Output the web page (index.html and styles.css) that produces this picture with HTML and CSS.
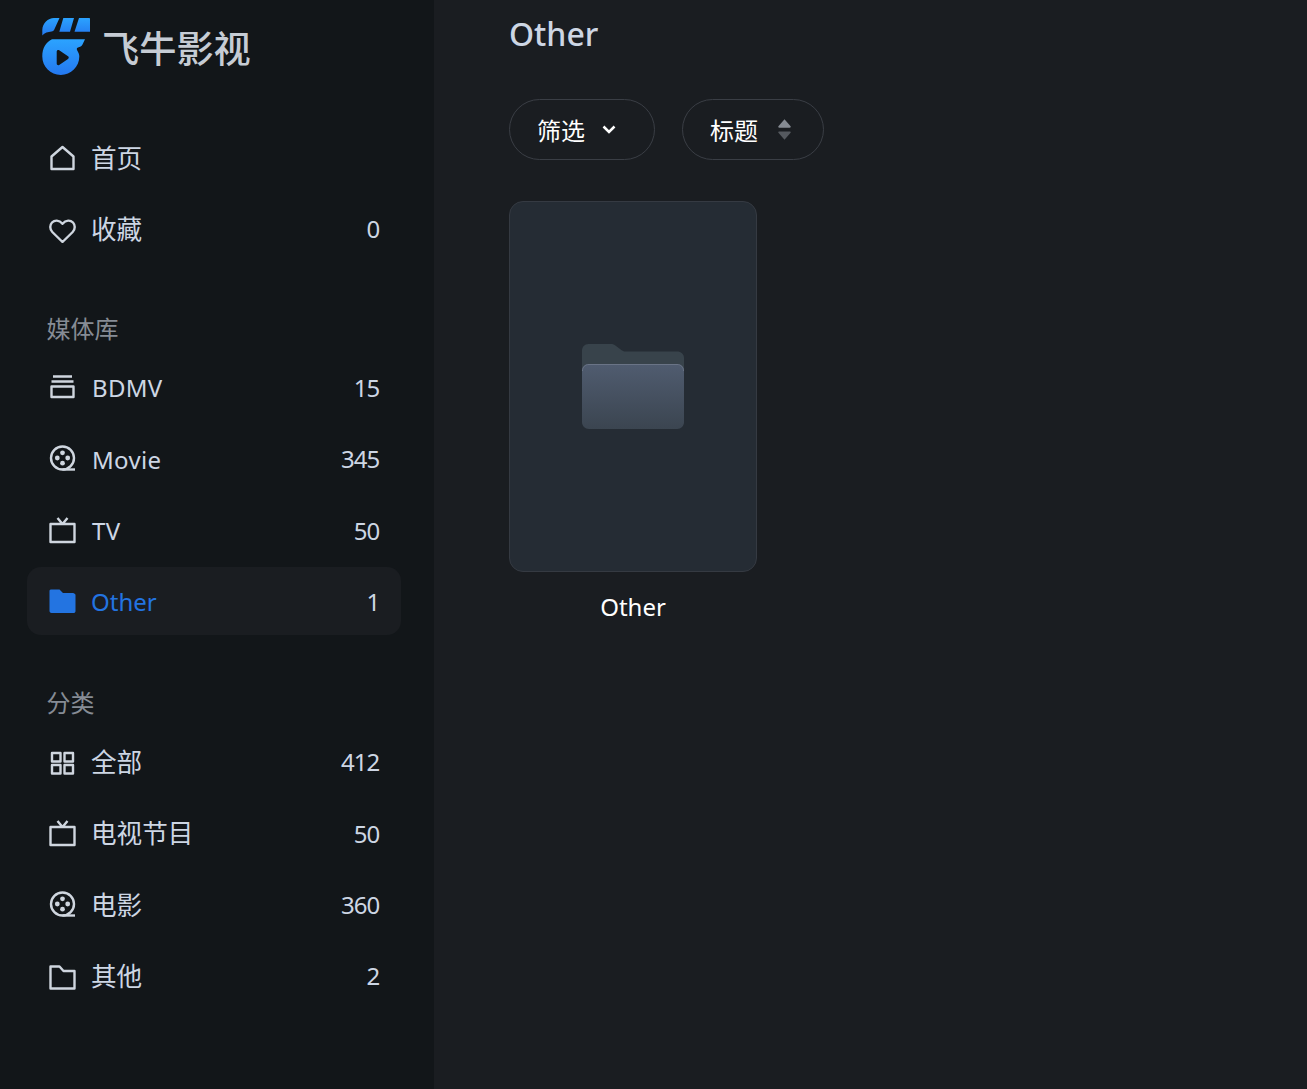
FILE: index.html
```html
<!DOCTYPE html>
<html lang="zh-CN">
<head>
<meta charset="utf-8">
<title>飞牛影视</title>
<link rel="stylesheet" href="styles.css">
</head>
<body>
<div class="app">
  <aside class="sidebar">
    <div class="brand">
      <svg class="logo" viewBox="0 0 48 57" aria-hidden="true">
        <defs>
          <linearGradient id="lg" x1="0" y1="0" x2="0" y2="1"><stop offset="0" stop-color="#2ba3ff"/><stop offset="1" stop-color="#2478f0"/></linearGradient>
        </defs>
        <path fill="url(#lg)" d="M.3 17.500V12C.5 5 6 0 12 0H17.500L12.500 11C12 12.500 11 13.200 9.500 13.400C6 13.800 2.500 14.500 .3 17.500ZM21.300 0H32L28 13.700H17.300ZM37 0H47C47.600 0 48 .4 48 1V13.700H32.500Z"/>
        <path fill="url(#lg)" fill-rule="evenodd" d="M10 21.300H43L40.500 26.500C39.500 28.500 38 29 36 29.500C34.500 30 34.500 31 35.500 33C36.700 35 37.300 36.500 37.300 38.500C37.300 48.700 29 57 18.800 57C8.500 57 .3 48.700 .3 38.500C.3 30 4 24 10 21.300ZM14.700 33.500V45.500C14.700 46.900 16 47.600 17.200 46.900L26 41C27 40.300 27 39 26 38.300L17.200 32.200C16 31.500 14.700 32.200 14.700 33.500Z"/>
      </svg>
      <span class="brand-name">飞牛影视</span>
    </div>

    <nav class="nav nav-top">
      <a class="row"><svg class="ico" viewBox="0 0 28 28"><path d="M3.500 12.500L14.500 3L25.500 12.500V25H3.500Z"/></svg><span class="label zh">首页</span></a>
      <a class="row"><svg class="ico" viewBox="0 0 28 28"><path d="M14.500 27L4.300 17C1.500 14.200 1.800 9.800 4 7.500C6.500 5 11 4.500 14.500 8.800C18 4.500 22.500 5 25 7.500C27.200 9.800 27.500 14.200 24.700 17Z"/></svg><span class="label zh">收藏</span><span class="count">0</span></a>
    </nav>

    <h2 class="section first">媒体库</h2>
    <nav class="nav">
      <a class="row"><svg class="ico" viewBox="0 0 28 28"><path d="M5 3.500H24M3.500 8.500H25.500M3.500 13.500H25.500V24H3.500Z"/></svg><span class="label">BDMV</span><span class="count">15</span></a>
      <a class="row"><svg class="ico" viewBox="0 0 28 28"><circle cx="14.500" cy="13" r="11.500"/><path d="M14.500 24.500H27"/><g class="dots"><circle cx="14.500" cy="7.800" r="2.400"/><circle cx="9.300" cy="13" r="2.400"/><circle cx="19.700" cy="13" r="2.400"/><circle cx="14.500" cy="18.200" r="2.400"/></g></svg><span class="label">Movie</span><span class="count">345</span></a>
      <a class="row"><svg class="ico" viewBox="0 0 28 28"><path d="M2.500 8H26.500V26H2.500ZM9.500 2L14.500 8L19.500 2"/></svg><span class="label">TV</span><span class="count">50</span></a>
      <a class="row active"><svg class="ico solid" viewBox="0 0 28 28"><path d="M1.500 4C1.500 3 2.100 2.500 3.500 2.500H11.500L15 6H25C26 6 27.500 7 27.500 8V24C27.500 25.500 26.500 26 25.500 26H3.500C2.500 26 1.500 25.200 1.500 24Z"/></svg><span class="label">Other</span><span class="count">1</span></a>
    </nav>

    <h2 class="section">分类</h2>
    <nav class="nav">
      <a class="row"><svg class="ico" viewBox="0 0 28 28"><path d="M4 5H12.500V13.500H4ZM16.500 5H25V13.500H16.500ZM4 17H12.500V25.500H4ZM16.500 17H25V25.500H16.500Z"/></svg><span class="label zh">全部</span><span class="count">412</span></a>
      <a class="row"><svg class="ico" viewBox="0 0 28 28"><path d="M2.500 8H26.500V26H2.500ZM9.500 2L14.500 8L19.500 2"/></svg><span class="label zh">电视节目</span><span class="count">50</span></a>
      <a class="row"><svg class="ico" viewBox="0 0 28 28"><circle cx="14.500" cy="13" r="11.500"/><path d="M14.500 24.500H27"/><g class="dots"><circle cx="14.500" cy="7.800" r="2.400"/><circle cx="9.300" cy="13" r="2.400"/><circle cx="19.700" cy="13" r="2.400"/><circle cx="14.500" cy="18.200" r="2.400"/></g></svg><span class="label zh">电影</span><span class="count">360</span></a>
      <a class="row"><svg class="ico" viewBox="0 0 28 28"><path d="M2.500 4.500H11.500L15.500 9H26.500V26.500H2.500Z"/></svg><span class="label zh">其他</span><span class="count">2</span></a>
    </nav>
  </aside>

  <main class="main">
    <h1 class="title">Other</h1>
    <div class="filters">
      <button class="pill pill-filter"><span>筛选</span>
        <svg class="chev" viewBox="0 0 16 16"><path d="M2.500 5.500L8 11L13.500 5.500"/></svg>
      </button>
      <button class="pill pill-sort"><span>标题</span>
        <svg class="sort" viewBox="0 0 16 24"><path class="up" d="M8 1L14.500 8.500C15 9.300 14.500 10 13.500 10H2.500C1.500 10 1 9.300 1.500 8.500Z"/><path class="down" d="M8 23L14.500 15.500C15 14.700 14.500 14 13.500 14H2.500C1.500 14 1 14.700 1.500 15.500Z"/></svg>
      </button>
    </div>
    <div class="grid">
      <div class="item">
        <div class="poster">
          <svg class="folder" viewBox="0 0 104 88">
            <defs>
              <linearGradient id="fg" x1="0" y1="0" x2="0" y2="1"><stop offset="0" stop-color="#505c70"/><stop offset="1" stop-color="#3b4550"/></linearGradient>
            </defs>
            <path fill="#38434b" d="M1 8C1 4 3.500 1 7.500 1H30C32 1 33 1.500 35 3L41 7.500C42 8 43 8.500 44.500 8.500H96C100 8.500 103 11 103 15V40H1Z"/>
            <path fill="url(#fg)" d="M1 28C1 24 4 21 8 21H96C100 21 103 24 103 28V79C103 83 100 86 96 86H8C4 86 1 83 1 79Z"/>
            <path fill="none" stroke="#6a7486" stroke-width="1" d="M1.500 28C1.500 24 4 21.500 8 21.500H96C100 21.500 102.500 24 102.500 28"/>
          </svg>
        </div>
        <div class="caption">Other</div>
      </div>
    </div>
  </main>
</div>
</body>
</html>
```
FILE: styles.css
```css
* { box-sizing: border-box; }
html, body { margin: 0; height: 100%; }
body {
  background: #1a1d21;
  font-family: "Noto Sans", "Noto Sans CJK SC", sans-serif;
  overflow: hidden;
}
.app { display: flex; height: 1089px; }

.sidebar {
  width: 434px;
  flex: none;
  background: #121619;
  padding: 18px 33px 0 27px;
}
.brand {
  display: flex;
  align-items: flex-start;
  gap: 12px;
  height: 106px;
  padding-left: 15px;
}
.logo { width: 48px; height: 57px; flex: none; }
.brand-name {
  font-size: 37.200px;
  line-height: 62px;
  font-weight: 500;
  color: #c6ccd4;
}

.nav { display: flex; flex-direction: column; gap: 3.300px; }
.row {
  display: flex;
  align-items: center;
  height: 68px;
  padding: 0 21.600px 0 21px;
  border-radius: 14px;
  color: #cdd6e4;
  font-size: 24px;
}
.row .label {
  margin-left: 16px;
  flex: 1;
  letter-spacing: .3px;
  position: relative;
  top: .5px;
}
.row .label.zh {
  margin-left: 15px;
  font-size: 25.600px;
  letter-spacing: 0;
  top: -1px;
}
.row .count {
  letter-spacing: -.9px;
}
.nav-top .row .count { position: relative; top: -1px; }
.ico {
  width: 28px; height: 28px; flex: none;
  fill: none;
  stroke: #cfd6df;
  stroke-width: 2.400;
  stroke-linejoin: round;
}
.ico .dots { fill: #cfd6df; stroke: none; }
.ico.solid { fill: #2374e1; stroke: none; }
.row.active { background: #1a1d21; color: #2374e1; }
.row.active .label { margin-left: 15px; letter-spacing: 0; }
.row.active .count { color: #cdd6e4; }

.section {
  margin: 0;
  height: 74px;
  display: flex;
  align-items: flex-end;
  padding: 0 0 9px 19.500px;
  font-size: 24px;
  line-height: 32px;
  font-weight: 400;
  color: #868c95;
}
.section.first { margin-top: 16.200px; padding-bottom: 8.500px; }
.section:not(.first) { margin-top: 18.600px; }

.main { flex: 1; padding: 0 0 0 75px; }
.title {
  margin: 0;
  height: 99px;
  padding-top: 11px;
  font-size: 32px;
  line-height: 46px;
  font-weight: 500;
  color: #cdd6e4;
}
.filters { display: flex; gap: 27px; }
.pill {
  display: flex;
  align-items: center;
  height: 61px;
  background: transparent;
  border: 1px solid #3a3e45;
  border-radius: 31px;
  color: #fff;
  font: inherit;
  font-size: 24px;
  padding: 0 0 1px 27px;
}
.pill-filter { width: 146px; gap: 16px; }
.pill-sort { width: 142px; gap: 19px; }
.chev { width: 16px; height: 16px; fill: none; stroke: #fff; stroke-width: 2.500; }
.sort { width: 15px; height: 23px; }
.sort .up { fill: #868b93; }
.sort .down { fill: #55595f; }

.grid { display: flex; margin-top: 41px; }
.item { width: 248px; }
.poster {
  height: 371px;
  background: #252c34;
  border: 1px solid #353a42;
  border-radius: 14px;
  display: flex;
  align-items: center;
  justify-content: center;
}
.folder { width: 104px; height: 88px; }
.caption {
  text-align: center;
  color: #fff;
  font-size: 24px;
  line-height: 34px;
  margin-top: 18px;
}
```
